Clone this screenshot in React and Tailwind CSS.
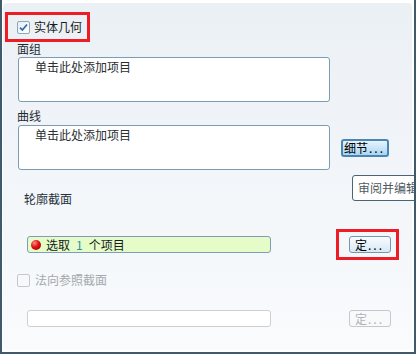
import React from "react";

const font = { fontFamily: '"Noto Sans CJK SC", "Liberation Sans", sans-serif' };

function CheckBox({ checked, disabled }) {
  return (
    <div
      className={
        "w-[13px] h-[13px] shrink-0 rounded-[2px] border flex items-center justify-center " +
        (disabled
          ? "border-[#c4c8cc] bg-[#f6f8fa]"
          : "border-[#8ea6b8] bg-gradient-to-br from-[#e9eef2] to-[#ffffff]")
      }
    >
      {checked && (
        <svg width="9" height="9" viewBox="0 0 9 9">
          <path d="M1 4.6 L3.4 7 L8 1.5" fill="none" stroke="#2b6cad" strokeWidth="1.7" />
        </svg>
      )}
    </div>
  );
}

export default function App() {
  return (
    <div
      className="relative w-[416px] h-[354px] overflow-hidden bg-white border-l-2 border-r-2 border-b-2 border-[#3e5a6b] pt-[3px] pl-[1px] pr-[2px] pb-[2px] text-[12px] leading-[14px] text-[#1f2b33]"
      style={font}
    >
      <div className="h-full rounded-[4px] bg-gradient-to-b from-[#ebf0f5] to-[#f9fbfd] flex flex-col">
        {/* checked section header, framed in red */}
        <div className="ml-[2px] mt-[9px] w-[85px] h-[30px] border-[3px] border-[#ee1c25] flex items-center pl-[9px] gap-[4px]">
          <CheckBox checked />
          <span className="text-[12px] text-[#141c22]">实体几何</span>
        </div>

        <div className="ml-[14px] mt-[0px]">面组</div>
        <div className="ml-[15px] mt-[1px] w-[312px] h-[45px] rounded-[3px] border border-[#7a9db4] bg-white pl-[16px] pt-[2px] text-[#2a2f33]">
          单击此处添加项目
        </div>

        <div className="ml-[14px] mt-[7px]">曲线</div>
        <div className="flex mt-[2px]">
          <div className="ml-[15px] w-[312px] h-[45px] rounded-[3px] border border-[#7a9db4] bg-white pl-[16px] pt-[2px] text-[#2a2f33]">
            单击此处添加项目
          </div>
          <div className="ml-[11px] mt-[14px] w-[48px] h-[18px] rounded-[3px] border-2 border-[#4a86b4] bg-gradient-to-b from-[#e6f4fc] to-[#a9d6f3] flex items-center pl-[1px] text-[12px] leading-[14px] text-black">
            细节<span className="tracking-[2px] ml-[1px]">...</span>
          </div>
        </div>

        <div className="ml-[21px] mt-[22px] text-[#23303a]">轮廓截面</div>

        <div className="flex items-center mt-[23px]">
          <div className="ml-[24px] w-[244px] h-[17px] rounded-[3px] border border-[#7c9fb6] bg-[#e5fcc9] flex items-center pl-[3px]">
            <div className="w-[10px] h-[10px] rounded-full bg-[radial-gradient(circle_at_35%_30%,#ff8a80,#e01010_45%,#8a0000)]" />
            <span className="ml-[5px] text-[#141c22]">选取</span>
            <span className="ml-[6px] text-[#2f8fa6]">1</span>
            <span className="ml-[6px] text-[#141c22]">个项目</span>
          </div>
          <div className="ml-[65px] w-[63px] h-[31px] border-[3px] border-[#ee1c25] flex items-center pl-[10px]">
            <div className="w-[42px] h-[17px] rounded-[3px] border border-[#7596ad] bg-gradient-to-b from-[#f8fbfe] to-[#d6e9f6] flex items-center pl-[5px] text-black">
              定<span className="tracking-[2px] ml-[1px]">...</span>
            </div>
          </div>
        </div>

        <div className="flex items-center h-[14px] mt-[13px] ml-[14px] gap-[5px] text-[#a4a8ab]">
          <CheckBox disabled />
          <span>法向参照截面</span>
        </div>

        <div className="flex items-center mt-[23px]">
          <div className="ml-[24px] w-[244px] h-[17px] rounded-[3px] border border-[#cdd1d4] bg-white" />
          <div className="ml-[78px] w-[42px] h-[17px] rounded-[3px] border border-[#c4c8cb] bg-[#f7f9fb] flex items-center pl-[5px] text-[#b0b4b7]">
            定<span className="tracking-[2px] ml-[1px]">...</span>
          </div>
        </div>
      </div>

      {/* tooltip overlapping the window edge */}
      <div className="absolute left-[350px] top-[175px] w-[80px] h-[26px] rounded-[3px] border border-[#4b6475] bg-white flex items-center pl-[5px] whitespace-nowrap text-[#4f5a62]">
        审阅并编辑器
      </div>
    </div>
  );
}
